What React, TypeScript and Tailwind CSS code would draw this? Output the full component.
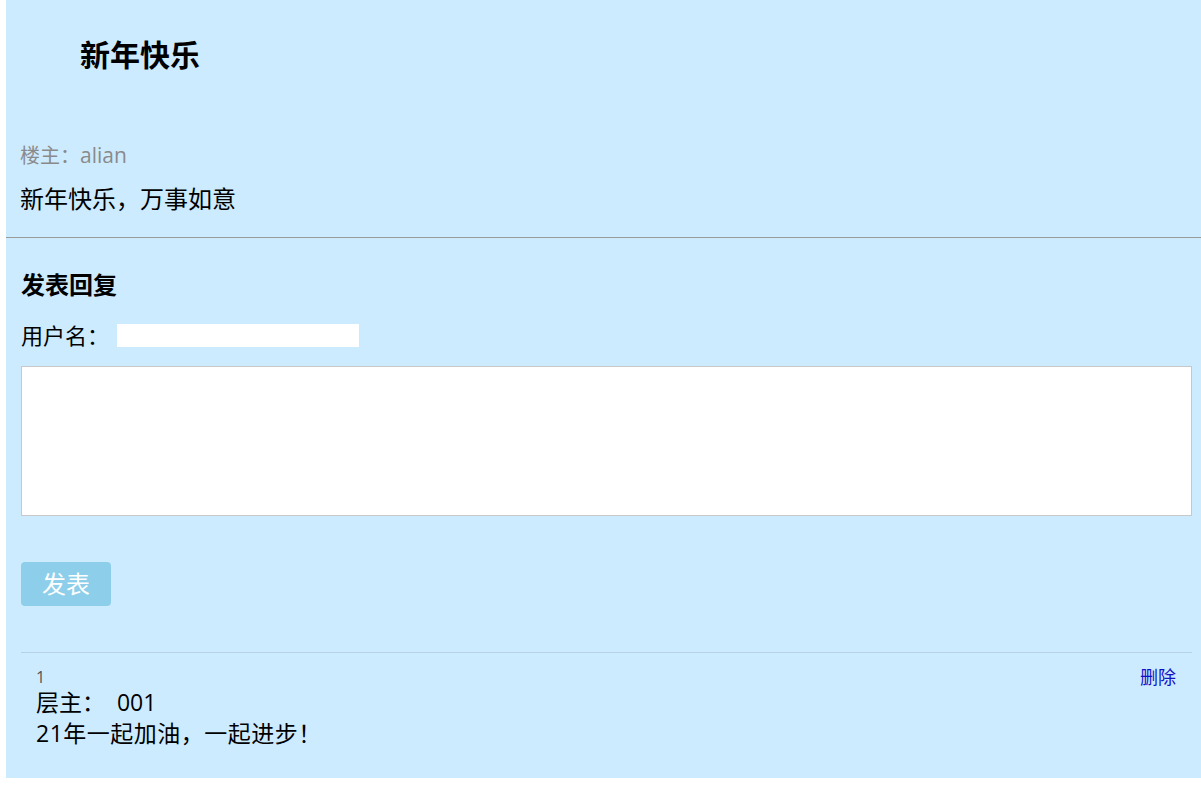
export default function App() {
  return (
    <div className="min-h-[791px] w-full bg-white font-['Open_Sans','Noto_Sans_CJK_SC',sans-serif] text-black">
      <div className="ml-[6px] w-[1195px] bg-[#cdebff] pb-[29px]">
        {/* Post header */}
        <h1 className="pl-[74px] pt-[35px] text-[30px] font-bold leading-[40px]">新年快乐</h1>
        <p className="mt-[66px] pl-[14px] text-[20px] leading-[28px] text-[#8a8a8a]">
          楼主：<span className="text-[21px]">alian</span>
        </p>
        <p className="mt-[13px] pl-[14px] text-[24px] leading-[32px]">新年快乐，万事如意</p>
        <div className="mt-[22px] h-px bg-[#9a9a9a]" />

        {/* Reply form */}
        <div className="px-[15px]">
          <h2 className="mt-[31px] text-[24px] font-bold leading-[32px]">发表回复</h2>
          <div className="mt-[18px] flex h-[32px] items-center text-[22px]">
            <span>用户名：</span>
            <input className="ml-[8px] h-[23px] w-[242px] bg-white outline-none" />
          </div>
          <textarea className="mt-[15px] block h-[150px] w-[1171px] resize-none border border-[#c8c8c8] bg-white outline-none" />
          <button className="mt-[46px] flex h-[44px] w-[90px] items-center justify-center rounded-[4px] bg-[#8dcfea] text-[24px] text-white">
            发表
          </button>
          <div className="mt-[46px] h-px w-[1171px] bg-[#b7d2e4]" />

          {/* Replies */}
          <div className="w-[1171px] pl-[15px] pr-[16px]">
            <div className="mt-[14px] flex items-center justify-between">
              <span className="text-[16px] leading-[20px] text-[#555]">1</span>
              <a href="#" className="text-[18px] leading-[20px] text-[#1010c8]">删除</a>
            </div>
            <p className="text-[23px] leading-[31px]">层主：&nbsp;&nbsp;001</p>
            <p className="text-[23px] leading-[31px] tracking-[0.5px]">21年一起加油，一起进步！</p>
          </div>
        </div>
      </div>
    </div>
  );
}
